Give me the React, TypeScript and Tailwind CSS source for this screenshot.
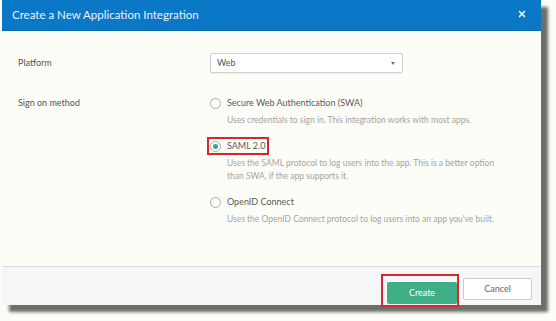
import React from 'react';
import { X } from 'lucide-react';

function Radio({ checked }: { checked?: boolean }) {
  return (
    <span className="w-[11px] h-[11px] rounded-full border border-[#a9a9a9] bg-white flex items-center justify-center shrink-0">
      {checked && <span className="w-[5px] h-[5px] rounded-full bg-[#3aa57f]" />}
    </span>
  );
}

function Option({
  label,
  lines,
  checked,
  marked,
}: {
  label: string;
  lines: string[];
  checked?: boolean;
  marked?: boolean;
}) {
  return (
    <div>
      <div className="relative flex items-center gap-[6px] h-[12px]">
        <Radio checked={checked} />
        <span className="text-[9px] text-[#5a5a5a]">{label}</span>
        {marked && (
          <span className="absolute -left-[3px] -top-[3px] w-[62px] h-[18px] border-2 border-[#d6262f]" />
        )}
      </div>
      <div className="pl-[17px] mt-[5px] text-[8.5px] leading-[13px] text-[#a3a3a3]">
        {lines.map((l) => (
          <div key={l}>{l}</div>
        ))}
      </div>
    </div>
  );
}

function App() {
  return (
    <div className="w-[556px] h-[321px] bg-[#fdfdf7] pl-[2px]" style={{ fontFamily: 'Lato, "Open Sans", sans-serif' }}>
      <div className="w-[539px] h-[305px] flex flex-col bg-[#fdfdf7] shadow-[7px_7px_3px_rgba(60,60,60,0.75)]">
        {/* Header */}
        <div className="h-[31px] bg-[#0a78c6] border-b border-[#0966a8] flex items-start justify-between pt-[6px] pl-[10px] pr-[14px]">
          <span className="text-[11.5px] text-[#e8f2fa]">Create a New Application Integration</span>
          <X className="w-[10px] h-[10px] text-white mt-[3px]" strokeWidth={3.5} />
        </div>

        {/* Body */}
        <div className="flex-1 pt-[22px] pl-[16px]">
          <div className="grid grid-cols-[192px_1fr] items-center">
            <span className="text-[9px] text-[#555]">Platform</span>
            <div className="w-[193px] h-[20px] border border-[#cfcfcf] rounded-[2px] bg-white shadow-[0_1px_1px_rgba(0,0,0,0.06)] flex items-center justify-between pl-[6px] pr-[7px]">
              <span className="text-[9px] text-[#555]">Web</span>
              <span className="w-0 h-0 border-l-[2.5px] border-r-[2.5px] border-t-[3px] border-l-transparent border-r-transparent border-t-[#777]" />
            </div>
          </div>

          <div className="grid grid-cols-[192px_1fr] mt-[24px]">
            <span className="text-[9px] text-[#555] leading-[12px]">Sign on method</span>
            <div className="flex flex-col gap-[13px]">
              <Option
                label="Secure Web Authentication (SWA)"
                lines={['Uses credentials to sign in. This integration works with most apps.']}
              />
              <Option
                label="SAML 2.0"
                checked
                marked
                lines={[
                  'Uses the SAML protocol to log users into the app. This is a better option',
                  'than SWA, if the app supports it.',
                ]}
              />
              <Option
                label="OpenID Connect"
                lines={["Uses the OpenID Connect protocol to log users into an app you've built."]}
              />
            </div>
          </div>
        </div>

        {/* Footer */}
        <div className="h-[39px] border-t border-[#dadada] bg-[#f6f6f8] flex justify-end items-start pt-[11px] pr-[9px] gap-[6px]">
          <div className="relative">
            <button className="w-[70px] h-[22px] rounded-[2px] bg-[#3fad85] text-white text-[9px]">Create</button>
            <span className="absolute -left-[6px] -top-[4px] -right-[2px] -bottom-[3px] border-2 border-[#d6262f]" />
          </div>
          <button className="w-[69px] h-[22px] rounded-[2px] bg-white border border-[#cccccc] text-[#666] text-[9px]">Cancel</button>
        </div>
      </div>
    </div>
  );
}

export default App;
